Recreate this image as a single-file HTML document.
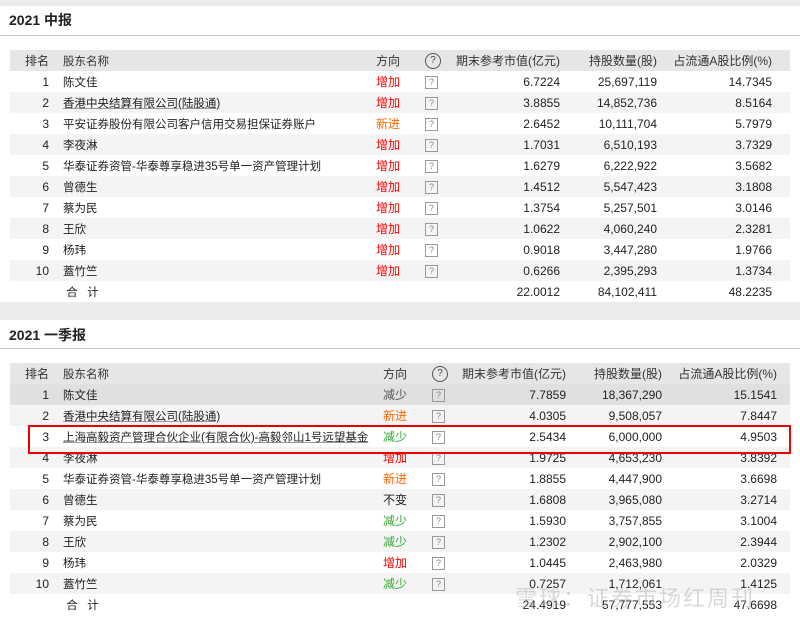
<!DOCTYPE html><html><head><meta charset="utf-8"><style>
body{margin:0;width:800px;height:621px;background:#ececec;font-family:"Liberation Sans","Noto Sans CJK SC",sans-serif;font-size:12px;color:#222;overflow:hidden;position:relative}
.panel{position:absolute;left:0;width:800px;background:#fff}
.title{position:absolute;left:9px;font-weight:bold;font-size:14px;color:#222}
.hr{position:absolute;left:0;width:800px;height:1px;background:#ccc}
table{position:absolute;left:10px;width:780px;border-collapse:collapse;table-layout:fixed}
td{height:21px;padding:0;white-space:nowrap;overflow:visible}
tr.h td{background:#e6e6e6;color:#333}
tr:nth-child(odd):not(.h) td{background:#f4f4f4}
tr.hl td{background:#e0e0e0 !important}
.r{text-align:right}
td.rk{text-align:right;padding-right:6px}
td.nm{padding-left:8px;font-size:11.5px}
td.d{padding-left:6px}
.q{display:inline-block;width:11px;height:11px;border:1px solid #999;font-size:9px;line-height:11px;text-align:center;color:#888;vertical-align:middle}
.qh{display:inline-block;width:14px;height:14px;border:1px solid #555;border-radius:50%;font-size:10px;line-height:14px;text-align:center;color:#444}
.u{text-decoration:underline;text-decoration-color:#999}
.red{color:#f00}.org{color:#f60}.grn{color:#3a3}
.box{position:absolute;left:28px;top:425px;width:759px;height:25px;border:2px solid #e00}
.wm{position:absolute;left:515px;top:581px;font-size:22px;color:rgba(170,170,170,.45);letter-spacing:2px}
</style></head><body>
<div class="panel" style="top:6px;height:296px"></div>
<div class="title" style="top:10px">2021 中报</div>
<div class="hr" style="top:35px"></div>
<table style="top:50px">
<colgroup><col style="width:45px"><col style="width:315px"><col style="width:55px"><col style="width:30px"><col style="width:105px"><col style="width:97px"><col style="width:115px"><col></colgroup>
<tr class="h"><td class="rk">排名</td><td class="nm">股东名称</td><td class="d">方向</td><td><span class="qh">?</span></td><td class="r">期末参考市值(亿元)</td><td class="r">持股数量(股)</td><td class="r">占流通A股比例(%)</td><td></td></tr>
<tr><td class="rk">1</td><td class="nm">陈文佳</td><td class="d red">增加</td><td><span class="q">?</span></td><td class="r">6.7224</td><td class="r">25,697,119</td><td class="r">14.7345</td><td></td></tr>
<tr><td class="rk">2</td><td class="nm"><span class="u">香港中央结算有限公司(陆股通)</span></td><td class="d red">增加</td><td><span class="q">?</span></td><td class="r">3.8855</td><td class="r">14,852,736</td><td class="r">8.5164</td><td></td></tr>
<tr><td class="rk">3</td><td class="nm">平安证券股份有限公司客户信用交易担保证券账户</td><td class="d org">新进</td><td><span class="q">?</span></td><td class="r">2.6452</td><td class="r">10,111,704</td><td class="r">5.7979</td><td></td></tr>
<tr><td class="rk">4</td><td class="nm">李夜淋</td><td class="d red">增加</td><td><span class="q">?</span></td><td class="r">1.7031</td><td class="r">6,510,193</td><td class="r">3.7329</td><td></td></tr>
<tr><td class="rk">5</td><td class="nm">华泰证券资管-华泰尊享稳进35号单一资产管理计划</td><td class="d red">增加</td><td><span class="q">?</span></td><td class="r">1.6279</td><td class="r">6,222,922</td><td class="r">3.5682</td><td></td></tr>
<tr><td class="rk">6</td><td class="nm">曾德生</td><td class="d red">增加</td><td><span class="q">?</span></td><td class="r">1.4512</td><td class="r">5,547,423</td><td class="r">3.1808</td><td></td></tr>
<tr><td class="rk">7</td><td class="nm">蔡为民</td><td class="d red">增加</td><td><span class="q">?</span></td><td class="r">1.3754</td><td class="r">5,257,501</td><td class="r">3.0146</td><td></td></tr>
<tr><td class="rk">8</td><td class="nm">王欣</td><td class="d red">增加</td><td><span class="q">?</span></td><td class="r">1.0622</td><td class="r">4,060,240</td><td class="r">2.3281</td><td></td></tr>
<tr><td class="rk">9</td><td class="nm">杨玮</td><td class="d red">增加</td><td><span class="q">?</span></td><td class="r">0.9018</td><td class="r">3,447,280</td><td class="r">1.9766</td><td></td></tr>
<tr><td class="rk">10</td><td class="nm">蓋竹竺</td><td class="d red">增加</td><td><span class="q">?</span></td><td class="r">0.6266</td><td class="r">2,395,293</td><td class="r">1.3734</td><td></td></tr>
<tr><td class="rk"></td><td class="nm">&nbsp;合&nbsp;&nbsp;&nbsp;计</td><td></td><td></td><td class="r">22.0012</td><td class="r">84,102,411</td><td class="r">48.2235</td><td></td></tr>
</table>
<div class="panel" style="top:320px;height:301px"></div>
<div class="title" style="top:325px">2021 一季报</div>
<div class="hr" style="top:348px"></div>
<table style="top:363px">
<colgroup><col style="width:45px"><col style="width:322px"><col style="width:55px"><col style="width:30px"><col style="width:104px"><col style="width:96px"><col style="width:115px"><col></colgroup>
<tr class="h"><td class="rk">排名</td><td class="nm">股东名称</td><td class="d">方向</td><td><span class="qh">?</span></td><td class="r">期末参考市值(亿元)</td><td class="r">持股数量(股)</td><td class="r">占流通A股比例(%)</td><td></td></tr>
<tr class="hl"><td class="rk">1</td><td class="nm">陈文佳</td><td class="d" style="color:#555">减少</td><td><span class="q">?</span></td><td class="r">7.7859</td><td class="r">18,367,290</td><td class="r">15.1541</td><td></td></tr>
<tr><td class="rk">2</td><td class="nm"><span class="u">香港中央结算有限公司(陆股通)</span></td><td class="d org">新进</td><td><span class="q">?</span></td><td class="r">4.0305</td><td class="r">9,508,057</td><td class="r">7.8447</td><td></td></tr>
<tr><td class="rk">3</td><td class="nm"><span class="u">上海高毅资产管理合伙企业(有限合伙)-高毅邻山1号远望基金</span></td><td class="d grn">减少</td><td><span class="q">?</span></td><td class="r">2.5434</td><td class="r">6,000,000</td><td class="r">4.9503</td><td></td></tr>
<tr><td class="rk">4</td><td class="nm">李夜淋</td><td class="d red">增加</td><td><span class="q">?</span></td><td class="r">1.9725</td><td class="r">4,653,230</td><td class="r">3.8392</td><td></td></tr>
<tr><td class="rk">5</td><td class="nm">华泰证券资管-华泰尊享稳进35号单一资产管理计划</td><td class="d org">新进</td><td><span class="q">?</span></td><td class="r">1.8855</td><td class="r">4,447,900</td><td class="r">3.6698</td><td></td></tr>
<tr><td class="rk">6</td><td class="nm">曾德生</td><td class="d">不变</td><td><span class="q">?</span></td><td class="r">1.6808</td><td class="r">3,965,080</td><td class="r">3.2714</td><td></td></tr>
<tr><td class="rk">7</td><td class="nm">蔡为民</td><td class="d grn">减少</td><td><span class="q">?</span></td><td class="r">1.5930</td><td class="r">3,757,855</td><td class="r">3.1004</td><td></td></tr>
<tr><td class="rk">8</td><td class="nm">王欣</td><td class="d grn">减少</td><td><span class="q">?</span></td><td class="r">1.2302</td><td class="r">2,902,100</td><td class="r">2.3944</td><td></td></tr>
<tr><td class="rk">9</td><td class="nm">杨玮</td><td class="d red">增加</td><td><span class="q">?</span></td><td class="r">1.0445</td><td class="r">2,463,980</td><td class="r">2.0329</td><td></td></tr>
<tr><td class="rk">10</td><td class="nm">蓋竹竺</td><td class="d grn">减少</td><td><span class="q">?</span></td><td class="r">0.7257</td><td class="r">1,712,061</td><td class="r">1.4125</td><td></td></tr>
<tr><td class="rk"></td><td class="nm">&nbsp;合&nbsp;&nbsp;&nbsp;计</td><td></td><td></td><td class="r">24.4919</td><td class="r">57,777,553</td><td class="r">47.6698</td><td></td></tr>
</table>
<div class="box"></div>
<div class="wm">雪球：证券市场红周刊</div>
</body></html>
